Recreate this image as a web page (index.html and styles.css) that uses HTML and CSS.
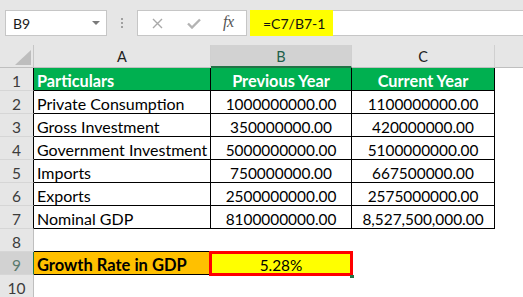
FILE: index.html
```html
<!DOCTYPE html>
<html>
<head>
<meta charset="utf-8">
<link rel="stylesheet" href="styles.css">
</head>
<body>
<div class="app">
  <div class="fbar">
    <div class="namebox">
      <span>B9</span>
      <svg class="dd" width="8" height="5" viewBox="0 0 8 5"><path d="M0 0H8L4 4Z" fill="#7a7a7a"/></svg>
    </div>
    <div class="dots"><i></i><i></i><i></i></div>
    <div class="fxbox">
      <svg class="ico-x" width="11" height="11" viewBox="0 0 11 11"><path d="M1 1L10 10M10 1L1 10" stroke="#a9a9a9" stroke-width="1.4" fill="none"/></svg>
      <svg class="ico-ok" width="14" height="11" viewBox="0 0 14 11"><path d="M1 5.5L5 9.5L13 1.5" stroke="#b3b3b3" stroke-width="2.4" fill="none"/></svg>
      <span class="fx">fx</span>
    </div>
    <div class="input"><span class="hl">=C7/B7-1</span></div>
  </div>

  <div class="sheet">
    <div class="corner"><svg width="16" height="15" viewBox="0 0 16 15"><path d="M16 0V15H0Z" fill="#bdbdbd"/></svg></div>
    <div class="ch">A</div>
    <div class="ch sel">B</div>
    <div class="ch">C</div>
    <div class="ch last"></div>

    <div class="rh t">1</div>
    <div class="c hd a">Particulars</div>
    <div class="c hd">Previous Year</div>
    <div class="c hd">Current Year</div>
    <div class="e"></div>

    <div class="rh t">2</div>
    <div class="c a">Private Consumption</div>
    <div class="c">1000000000.00</div>
    <div class="c">1100000000.00</div>
    <div class="e"></div>

    <div class="rh t">3</div>
    <div class="c a">Gross Investment</div>
    <div class="c">350000000.00</div>
    <div class="c">420000000.00</div>
    <div class="e"></div>

    <div class="rh t">4</div>
    <div class="c a">Government Investment</div>
    <div class="c">5000000000.00</div>
    <div class="c">5100000000.00</div>
    <div class="e"></div>

    <div class="rh t">5</div>
    <div class="c a">Imports</div>
    <div class="c">750000000.00</div>
    <div class="c">667500000.00</div>
    <div class="e"></div>

    <div class="rh t">6</div>
    <div class="c a">Exports</div>
    <div class="c">2500000000.00</div>
    <div class="c">2575000000.00</div>
    <div class="e"></div>

    <div class="rh t">7</div>
    <div class="c a">Nominal GDP</div>
    <div class="c">8100000000.00</div>
    <div class="c">8,527,500,000.00</div>
    <div class="e"></div>

    <div class="rh">8</div>
    <div class="e above"></div>
    <div class="e"></div>
    <div class="e"></div>
    <div class="e"></div>

    <div class="rh sel">9</div>
    <div class="c a growth">Growth Rate in GDP</div>
    <div class="c result">5.28%<span class="handle"></span></div>
    <div class="e"></div>
    <div class="e"></div>

    <div class="rh">10</div>
    <div class="e"></div>
    <div class="e"></div>
    <div class="e"></div>
    <div class="e"></div>
  </div>
</div>
</body>
</html>
```

FILE: styles.css
```css
* { box-sizing: border-box; }

html, body {
  margin: 0;
  padding: 0;
  background: #ffffff;
  overflow: hidden;
}

.app {
  width: 523px;
  height: 297px;
  font-family: "Lato", "Liberation Sans", sans-serif;
  font-size: 15px;
  color: #000;
}

/* ---------- formula bar ---------- */
.fbar {
  height: 45px;
  background: #e6e6e6;
  display: flex;
  align-items: flex-start;
  padding: 10px 0 0 5px;
}

.namebox {
  width: 102px;
  height: 26px;
  background: #fff;
  border: 1px solid #c6c6c6;
  display: flex;
  align-items: center;
  justify-content: space-between;
  padding: 0 6px 0 7px;
  font-size: 14px;
  color: #1a1a1a;
}

.dd { margin-top: 1px; }

.dots {
  width: 30px;
  height: 26px;
  display: flex;
  flex-direction: column;
  align-items: center;
  justify-content: center;
  gap: 2px;
}

.dots i {
  display: block;
  width: 2px;
  height: 2px;
  background: #a0a0a0;
}

.fxbox {
  width: 110px;
  height: 26px;
  background: #fff;
  border: 1px solid #c6c6c6;
  display: flex;
  align-items: center;
  padding-left: 14px;
}

.ico-x { margin-right: 24px; }
.ico-ok { margin-right: 22px; }

.fx {
  font-family: "Liberation Serif", serif;
  font-style: italic;
  font-size: 16px;
  color: #555;
  letter-spacing: -0.5px;
  margin-top: -2px;
}

.input {
  flex: 1;
  height: 26px;
  margin-left: 3px;
  background: #fff;
  border: 1px solid #c6c6c6;
  border-left: none;
  border-right: none;
  display: flex;
}

.hl {
  display: flex;
  align-items: center;
  width: 83px;
  margin: -1px 0;
  padding-left: 13px;
  background: #ffff00;
  font-size: 14px;
  color: #111;
}

/* ---------- sheet ---------- */
.sheet {
  display: grid;
  grid-template-columns: 34px 177px 141px 143px 1fr;
  grid-auto-rows: 23px;
}

.sheet > div {
  line-height: 18px;
  padding-top: 4px;
  white-space: nowrap;
  overflow: visible;
}

.corner {
  background: #e6e6e6;
  border-bottom: 1px solid #bfbfbf;
  border-right: 1px solid #c6c6c6;
  display: flex;
  justify-content: flex-end;
  align-items: flex-end;
  padding: 0 2px 2px 0 !important;
}

.corner svg { display: block; }

.ch {
  background: #e6e6e6;
  border-bottom: 1px solid #bfbfbf;
  border-right: 1px solid #d0d0d0;
  text-align: center;
  color: #222;
  font-size: 14.5px;
  padding-top: 3px !important;
}

.ch.sel {
  background: #d2d2d2;
  border-bottom: 2px solid #217346;
  color: #1e5f4a;
}

.ch.last { border-right: none; }

.rh {
  background: #e6e6e6;
  border-bottom: 1px solid #d6d6d6;
  border-right: 1px solid #bfbfbf;
  text-align: center;
  color: #3c3c3c;
  font-size: 15.5px;
}

.rh.t { border-right-color: #000; }

.rh.sel {
  background: #d2d2d2;
  border-right-color: #217346;
  color: #5a7a6e;
}

.c {
  border-right: 1px solid #000;
  border-bottom: 1px solid #000;
  text-align: center;
  font-size: 15.4px;
}

.c.a {
  text-align: left;
  padding-left: 3px;
  font-size: 16px;
}

.c.hd {
  background: #00b050;
  color: #fff;
  font-weight: 700;
  font-size: 16.3px;
}

.e.above { border-bottom: 1px solid #000; }

.growth {
  background: #ffc000;
  font-weight: 700;
  font-size: 16.5px !important;
}

.result {
  position: relative;
  background: #ffff00;
}

.result::after {
  content: "";
  position: absolute;
  top: -1px;
  left: -2px;
  right: -2px;
  bottom: -2px;
  border: 3px solid #ff0000;
  pointer-events: none;
}

.handle {
  position: absolute;
  right: -3px;
  bottom: -4px;
  width: 4px;
  height: 3px;
  background: #217346;
  z-index: 2;
}
```
